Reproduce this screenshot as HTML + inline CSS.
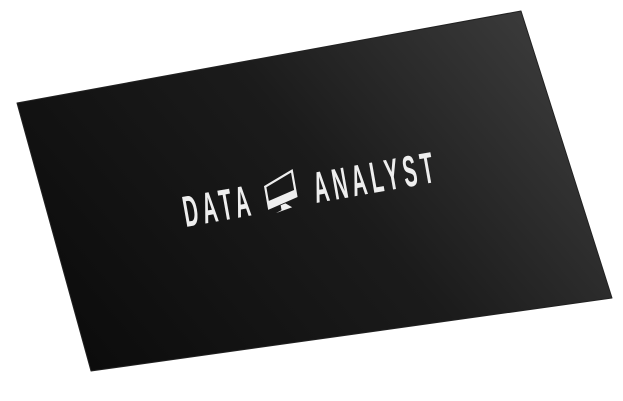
<!DOCTYPE html>
<html><head><style>html,body{margin:0;padding:0;background:#fff;width:623px;height:401px;overflow:hidden}</style></head>
<body>
<svg width="623" height="401" viewBox="0 0 623 401" xmlns="http://www.w3.org/2000/svg">
<defs>
<linearGradient id="g" x1="90" y1="371" x2="522" y2="11" gradientUnits="userSpaceOnUse">
<stop offset="0" stop-color="#0c0c0c"/>
<stop offset="0.55" stop-color="#1b1b1b"/>
<stop offset="1" stop-color="#3a3a3a"/>
</linearGradient>
</defs>
<polygon points="17,103 521,11 612,298 91,371" fill="url(#g)" stroke="#222" stroke-width="1" stroke-linejoin="round"/>
<g transform="translate(186,227) rotate(-10)">
<text x="0" y="0" transform="scale(0.46,1)" font-family="Liberation Sans, sans-serif" font-weight="bold" font-size="44" fill="#eee" letter-spacing="10">DATA</text>
<g transform="translate(84,-38)">
<path d="M1,12 L30,1 L30,27 L1,34 Z" fill="none" stroke="#eee" stroke-width="2.2"/>
<path d="M1,27 L30,20 L30,27 L1,34 Z" fill="#eee"/>
<path d="M13,33 L13,38 L7,40 L24,37 L18,32 Z" fill="#eee"/>
</g>
<text x="288" y="-1" transform="scale(0.46,1)" font-family="Liberation Sans, sans-serif" font-weight="bold" font-size="44" fill="#eee" letter-spacing="10">ANALYST</text>
</g>
</svg>
</body></html>
